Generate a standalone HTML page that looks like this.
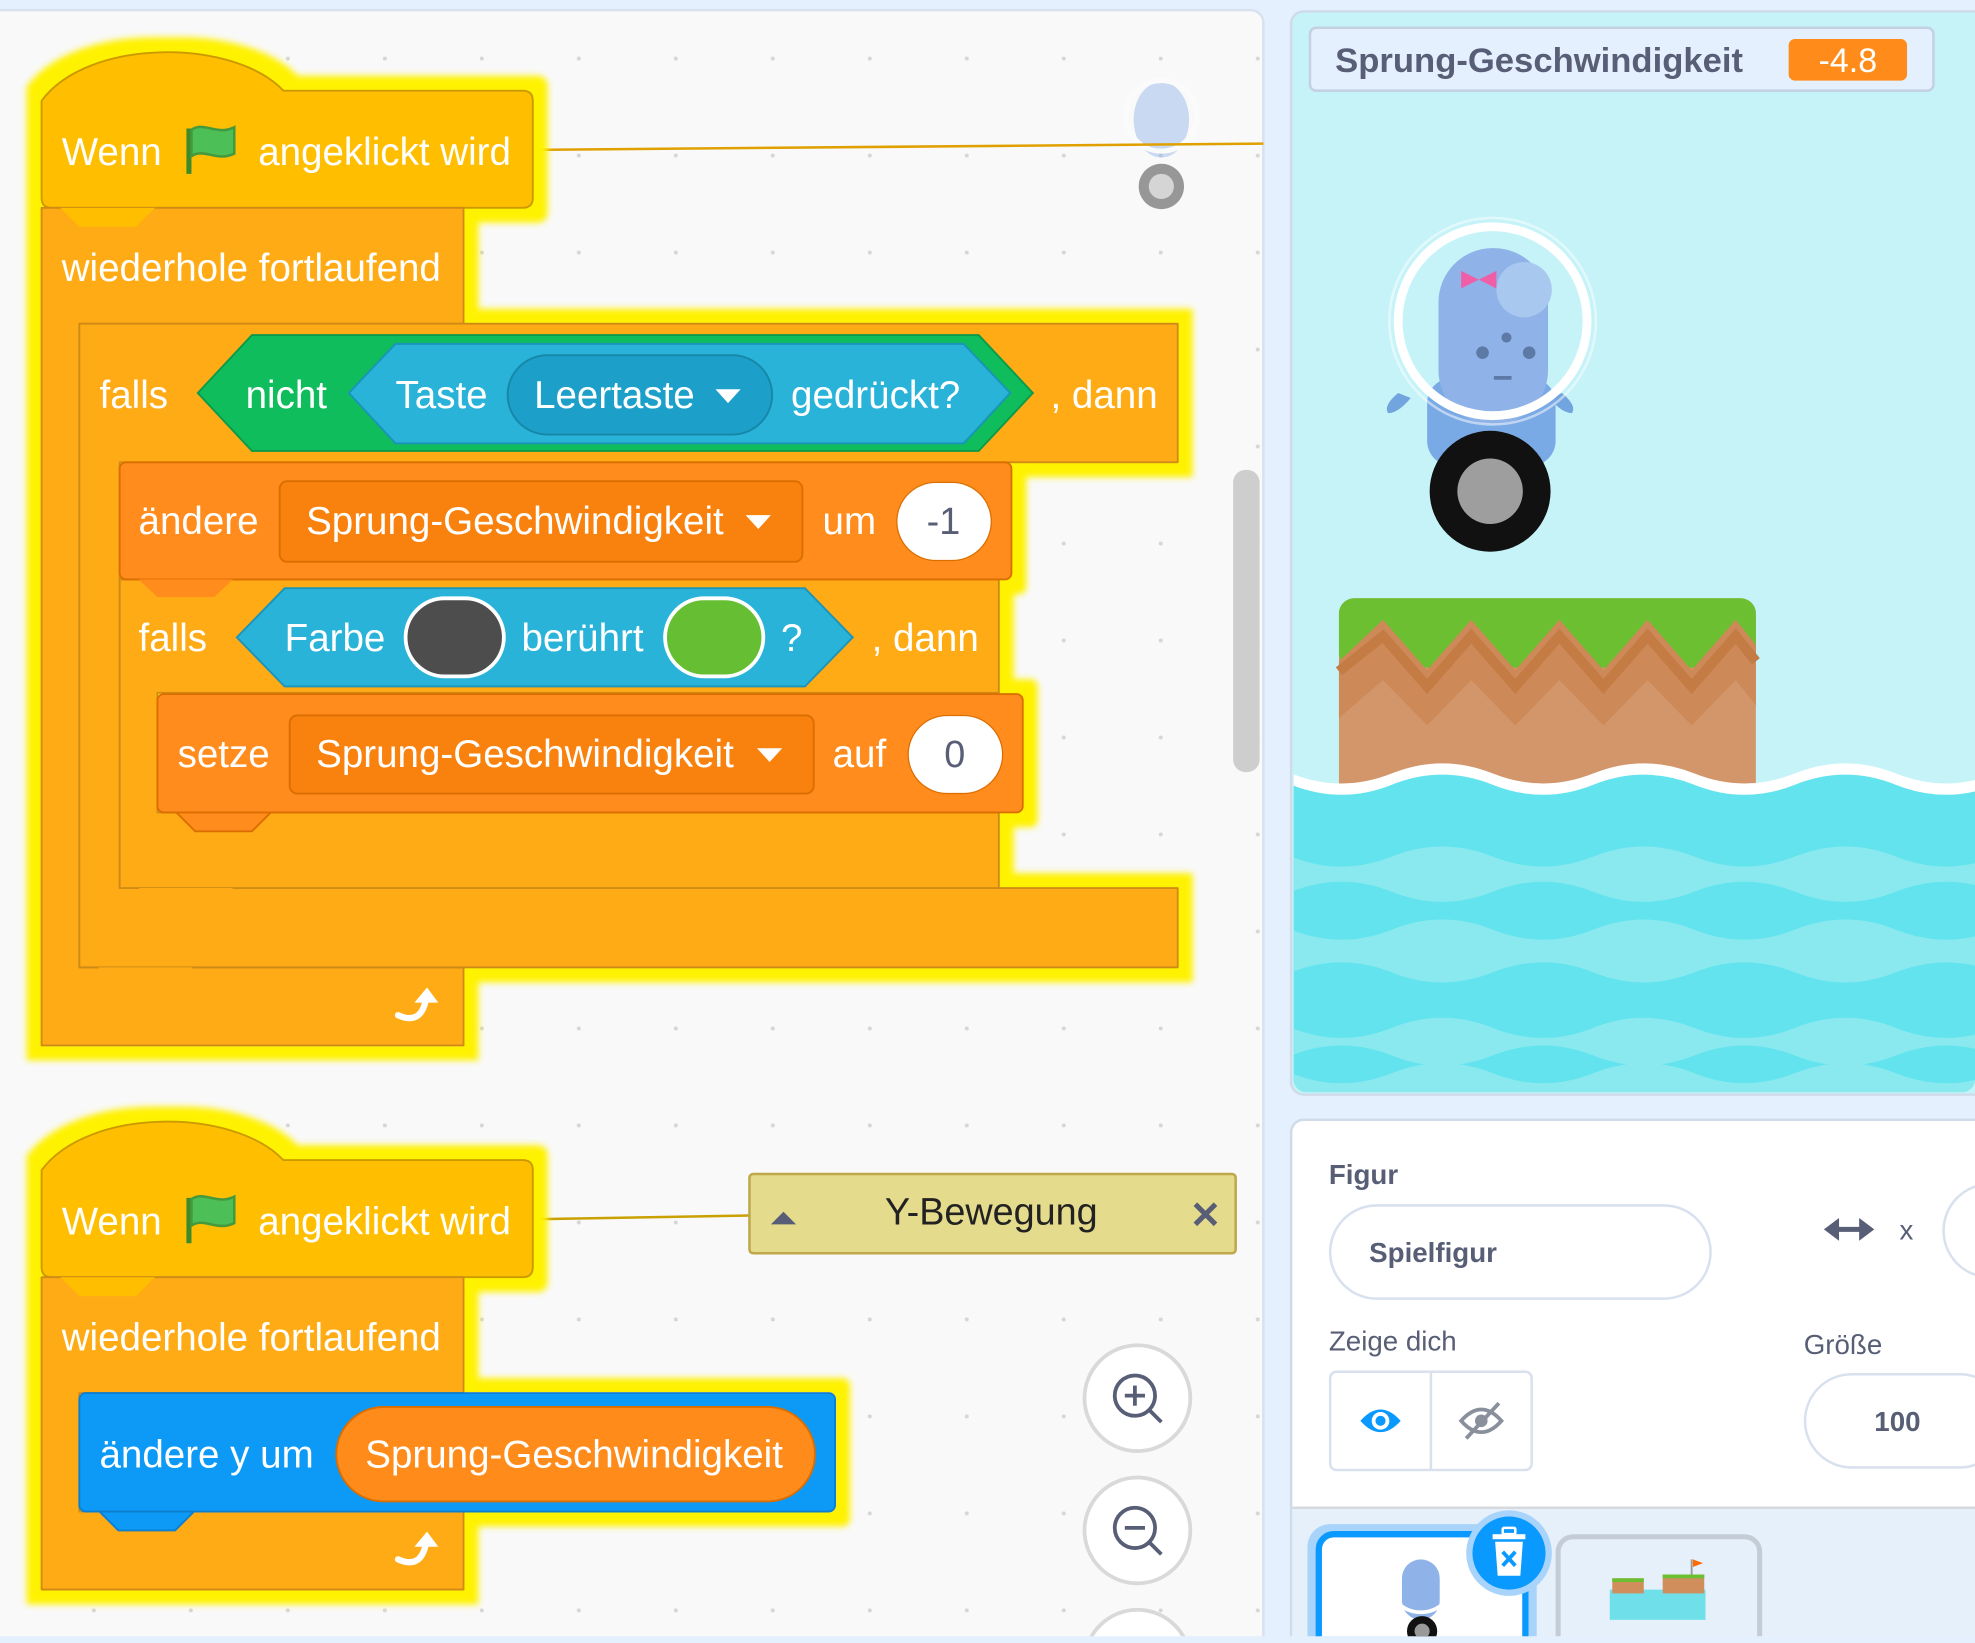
<!DOCTYPE html>
<html><head><meta charset="utf-8">
<style>
html,body{margin:0;padding:0;width:1975px;height:1636px;overflow:hidden;background:#e5f0ff;}
#wrap{position:absolute;left:0;top:0;width:1568px;height:1299px;transform:scale(1.2596);transform-origin:0 0;}
svg text{font-family:"Liberation Sans",sans-serif;}
</style></head><body>
<div id="wrap">
<svg width="1568" height="1299" viewBox="0 0 1568 1299" xmlns="http://www.w3.org/2000/svg">
<defs>
<pattern id="dots" x="73" y="45" width="77" height="77" patternUnits="userSpaceOnUse">
<circle cx="1.5" cy="1.5" r="1.6" fill="#d6d6d6"/></pattern>
<filter id="glow" x="-10%" y="-10%" width="120%" height="120%">
<feMorphology in="SourceAlpha" operator="dilate" radius="11" result="d"/>
<feGaussianBlur in="d" stdDeviation="2.5" result="b"/>
<feFlood flood-color="#fff200"/>
<feComposite in2="b" operator="in" result="g"/>
<feMerge><feMergeNode in="g"/><feMergeNode in="SourceGraphic"/></feMerge>
</filter>
<clipPath id="stageclip"><rect x="1027" y="10" width="541" height="857" rx="10"/></clipPath>
</defs>

<rect x="0" y="0" width="1568" height="1299" fill="#e5f0ff"/>
<rect x="-10" y="8" width="1013" height="1310" rx="10" fill="#f9f9f9" stroke="#d9e1ee" stroke-width="2"/>
<rect x="0" y="9" width="1002" height="1290" fill="url(#dots)"/>

<rect x="979" y="373" width="21" height="240" rx="10" fill="#cecece"/>

<g opacity="0.45">
<ellipse cx="922" cy="95" rx="22" ry="30" fill="#8fb3e8"/>
<circle cx="922" cy="92" r="28" fill="none" stroke="#fff" stroke-width="4"/>
<circle cx="922" cy="148" r="18" fill="#222"/><circle cx="922" cy="148" r="10" fill="#aaa"/>
</g>

<line x1="423" y1="119" x2="1003" y2="114" stroke="#e0a000" stroke-width="2"/>
<line x1="423" y1="968" x2="595" y2="965" stroke="#c9a100" stroke-width="2"/>

<g filter="url(#glow)" stroke-linejoin="round">
<path d="M33,80 C70,30 185,30 225,72 L415,72 Q423,72 423,80 L423,157 Q423,165 415,165 L41,165 Q33,165 33,157 Z" fill="#ffbf00" stroke="#cc9900" stroke-width="1.5"/>
<path d="M33,165 H368 V257 H63 V768 H368 V830 H33 Z" fill="#ffab19" stroke="#cf8b17" stroke-width="1.5"/>
<path d="M63,257 H935 V367 H95 V705 H935 V768 H63 Z" fill="#ffab19" stroke="#cf8b17" stroke-width="1.5"/>
<path d="M95,460 H793 V550 H125 V645 H793 V705 H95 Z" fill="#ffab19" stroke="#cf8b17" stroke-width="1.5"/>
<rect x="95" y="367" width="708" height="93" rx="5" fill="#ff8c1a" stroke="#db6e00" stroke-width="1.5"/>
<polygon points="110,460 125,474 170,474 185,460" fill="#ff8c1a"/>
<rect x="125" y="551" width="687" height="94" rx="5" fill="#ff8c1a" stroke="#db6e00" stroke-width="1.5"/>
<polygon points="140,645 155,660 200,660 215,645" fill="#ff8c1a" stroke="#db6e00" stroke-width="1.5"/>
<polygon points="48,165 63,180 108,180 123,165" fill="#ffbf00"/>
<polygon points="78,768 93,783 138,783 153,768" fill="#ffab19"/>
<polygon points="110,705 125,720 170,720 185,705" fill="#ffab19"/>
</g>
<polygon points="157,312 200,266 777,266 820,312 777,358 200,358" fill="#0fbd5c" stroke="#0b9a4a" stroke-width="1.5"/>
<polygon points="277,312 314,273 765,273 802,312 765,352 314,352" fill="#2ab3d9" stroke="#1a94b8" stroke-width="1.5"/>
<rect x="403" y="282" width="210" height="63" rx="31.5" fill="#1c9fc9" stroke="#1787a8" stroke-width="1.5"/>
<polygon points="188,506 226,467 639,467 677,506 639,545 226,545" fill="#2ab3d9" stroke="#1a94b8" stroke-width="1.5"/>
<rect x="322" y="475" width="78" height="62" rx="31" fill="#4d4d4d" stroke="#fff" stroke-width="3"/>
<rect x="528" y="475" width="78" height="62" rx="31" fill="#66bf33" stroke="#fff" stroke-width="3"/>
<rect x="222" y="382" width="415" height="64" rx="6" fill="#f9820f" stroke="#db6e00" stroke-width="1.5"/>
<rect x="712" y="383" width="75" height="62" rx="31" fill="#fff" stroke="#db6e00" stroke-width="1"/>
<rect x="230" y="568" width="416" height="62" rx="6" fill="#f9820f" stroke="#db6e00" stroke-width="1.5"/>
<rect x="721" y="568" width="75" height="62" rx="31" fill="#fff" stroke="#db6e00" stroke-width="1"/>

<g fill="#fff" font-size="30.6">
<text x="49" y="131">Wenn</text>
<text x="205" y="131">angeklickt wird</text>
<text x="49" y="223">wiederhole fortlaufend</text>
<text x="79" y="324">falls</text>
<text x="195" y="324">nicht</text>
<text x="314" y="324">Taste</text>
<text x="424" y="324">Leertaste</text>
<text x="628" y="324">gedrückt?</text>
<text x="834" y="324">, dann</text>
<text x="110" y="424">ändere</text>
<text x="243" y="424">Sprung-Geschwindigkeit</text>
<text x="653" y="424">um</text>
<text x="110" y="517">falls</text>
<text x="226" y="517">Farbe</text>
<text x="414" y="517">berührt</text>
<text x="620" y="517">?</text>
<text x="692" y="517">, dann</text>
<text x="141" y="609">setze</text>
<text x="251" y="609">Sprung-Geschwindigkeit</text>
<text x="661" y="609">auf</text>
</g>
<g fill="#575e75" font-size="30" text-anchor="middle">
<text x="749" y="424">-1</text><text x="758" y="609">0</text></g>
<g fill="#fff">
<polygon points="568,309 588,309 578,320"/><polygon points="592,409 612,409 602,420"/><polygon points="601,594 621,594 611,605"/>
</g>
<g id="flag1">
<path d="M150,102 V138" stroke="#3d8a2a" stroke-width="4"/>
<path d="M152,103 C162,96 172,108 186,101 V122 C172,129 162,117 152,124 Z" fill="#4cbf56" stroke="#45993d" stroke-width="2"/>
</g>
<g id="loop1">
<path d="M316,806 Q334,814 338,794" stroke="#fff" stroke-width="5" fill="none" stroke-linecap="round"/><polygon points="329,796 348,796 339,784" fill="#fff"/>
</g>

<g filter="url(#glow)" stroke-linejoin="round">
<path d="M33,929 C70,879 185,879 225,921 L415,921 Q423,921 423,929 L423,1006 Q423,1014 415,1014 L41,1014 Q33,1014 33,1006 Z" fill="#ffbf00" stroke="#cc9900" stroke-width="1.5"/>
<path d="M33,1014 H368 V1106 H63 V1200 H368 V1262 H33 Z" fill="#ffab19" stroke="#cf8b17" stroke-width="1.5"/>
<rect x="63" y="1106" width="600" height="94" rx="5" fill="#0a9af7" stroke="#0b7fd0" stroke-width="1.5"/>
<polygon points="79,1200 94,1215 139,1215 154,1200" fill="#0a9af7" stroke="#0b7fd0" stroke-width="1.5"/>
<polygon points="48,1014 63,1029 108,1029 123,1014" fill="#ffbf00"/>
</g>
<rect x="267" y="1117" width="380" height="75" rx="37.5" fill="#ff8c1a" stroke="#db6e00" stroke-width="1.5"/>
<g fill="#fff" font-size="30.6">
<text x="49" y="980">Wenn</text>
<text x="205" y="980">angeklickt wird</text>
<text x="49" y="1072">wiederhole fortlaufend</text>
<text x="79" y="1165">ändere y um</text>
<text x="290" y="1165">Sprung-Geschwindigkeit</text>
</g>
<use href="#flag1" y="849"/>
<use href="#loop1" y="432"/>

<rect x="595" y="932" width="386" height="63" rx="3" fill="#e4db8c" stroke="#bfa84a" stroke-width="2"/>
<polygon points="612,972 632,972 622,962" fill="#575e75"/>
<text x="787" y="972" font-size="30" text-anchor="middle" fill="#222">Y-Bewegung</text>
<path d="M949,956 L965,972 M965,956 L949,972" stroke="#575e75" stroke-width="4"/>

<g fill="#fff" stroke="#d9d9d9" stroke-width="3">
<circle cx="903" cy="1110" r="42"/><circle cx="903" cy="1215" r="42"/><circle cx="903" cy="1320" r="42"/></g>
<g fill="none" stroke="#575e75" stroke-width="3">
<circle cx="901" cy="1108" r="16"/><line x1="913" y1="1120" x2="922" y2="1129"/><line x1="893" y1="1108" x2="909" y2="1108"/><line x1="901" y1="1100" x2="901" y2="1116"/>
<circle cx="901" cy="1213" r="16"/><line x1="913" y1="1225" x2="922" y2="1234"/><line x1="893" y1="1213" x2="909" y2="1213"/>
</g>

<rect x="1025" y="9" width="560" height="860" rx="10" fill="#c5f3f8" stroke="#d0dbe9" stroke-width="2"/>
<g clip-path="url(#stageclip)">
<rect x="1063" y="475" width="331" height="160" rx="12" fill="#d3966b"/>
<rect x="1063" y="475" width="331" height="55" rx="12" fill="#6cbf30"/>
<path d="M1063,525 L1098,492 L1133,532 L1168,492 L1203,532 L1238,492 L1273,532 L1308,492 L1343,532 L1378,492 L1394,512 V560 L1378,540 L1343,576 L1308,540 L1273,576 L1238,540 L1203,576 L1168,540 L1133,576 L1098,540 L1063,570 Z" fill="#cd8a58"/>
<path d="M1063,533 L1098,505 L1133,545 L1168,505 L1203,545 L1238,505 L1273,545 L1308,505 L1343,545 L1378,505 L1394,525" stroke="#c47c44" stroke-width="8" fill="none"/>
<path d="M945,614 q40,-16 80,0 t80,0 t80,0 t80,0 t80,0 t80,0 t80,0 t80,0 V900 H945 Z" fill="#fff"/>
<path d="M945,623 q40,-16 80,0 t80,0 t80,0 t80,0 t80,0 t80,0 t80,0 t80,0 V900 H945 Z" fill="#63e3ee"/>
<path d="M945,680 q40,-16 80,0 t80,0 t80,0 t80,0 t80,0 t80,0 t80,0 t80,0 v28 q-40,-16 -80,0 t-80,0 t-80,0 t-80,0 t-80,0 t-80,0 t-80,0 t-80,0 Z" fill="#89e9ef"/>
<path d="M945,738 q40,-16 80,0 t80,0 t80,0 t80,0 t80,0 t80,0 t80,0 t80,0 v34 q-40,-16 -80,0 t-80,0 t-80,0 t-80,0 t-80,0 t-80,0 t-80,0 t-80,0 Z" fill="#89e9ef"/>
<path d="M945,816 q40,-16 80,0 t80,0 t80,0 t80,0 t80,0 t80,0 t80,0 t80,0 v22 q-40,-16 -80,0 t-80,0 t-80,0 t-80,0 t-80,0 t-80,0 t-80,0 t-80,0 Z" fill="#89e9ef"/>
<path d="M945,852 q40,-16 80,0 t80,0 t80,0 t80,0 t80,0 t80,0 t80,0 t80,0 v30 H945 Z" fill="#89e9ef"/>
<path d="M1110,312 q-12,10 -8,16 q8,0 18,-12 Z M1240,312 q12,10 8,16 q-8,0 -18,-12 Z" fill="#72a4e0"/>
<rect x="1133" y="300" width="102" height="70" rx="20" fill="#7aaae6"/>
<rect x="1142" y="197" width="87" height="140" rx="43" fill="#8fb3e8"/>
<circle cx="1210" cy="230" r="22" fill="#a9c8f0"/>
<circle cx="1185" cy="255" r="75" fill="none" stroke="#fff" stroke-width="7"/>
<circle cx="1185" cy="255" r="82" fill="none" stroke="#fff" stroke-width="2" opacity="0.5"/>
<path d="M1160,215 l14,7 l14,-7 v14 l-14,-7 l-14,7 Z" fill="#ef5fa7"/>
<circle cx="1177" cy="280" r="5" fill="#5d7aa6"/><circle cx="1196" cy="268" r="4" fill="#5d7aa6"/><circle cx="1214" cy="280" r="5" fill="#5d7aa6"/>
<line x1="1186" y1="300" x2="1200" y2="300" stroke="#5d7aa6" stroke-width="3"/>
<circle cx="1183" cy="390" r="48" fill="#111"/><circle cx="1183" cy="390" r="26" fill="#9e9e9e"/>
</g>
<rect x="1040" y="22" width="495" height="50" rx="5" fill="#e5f0ff" stroke="#c4d1e3" stroke-width="2"/>
<text x="1060" y="57" font-size="27.5" font-weight="bold" fill="#575e75">Sprung-Geschwindigkeit</text>
<rect x="1420" y="31" width="94" height="33" rx="5" fill="#ff8c1a"/>
<text x="1467" y="57" font-size="27" fill="#fff" text-anchor="middle">-4.8</text>

<rect x="1025" y="889" width="560" height="420" rx="10" fill="#fff" stroke="#d0dbe9" stroke-width="2"/>
<text x="1055" y="940" font-size="22" font-weight="bold" fill="#575e75">Figur</text>
<rect x="1056" y="957" width="302" height="74" rx="37" fill="#fff" stroke="#d9e1ee" stroke-width="2"/>
<text x="1087" y="1002" font-size="22" font-weight="bold" fill="#575e75">Spielfigur</text>
<path d="M1452,976 H1484" stroke="#575e75" stroke-width="4"/><polygon points="1448,976 1460,967 1460,985" fill="#575e75"/><polygon points="1488,976 1476,967 1476,985" fill="#575e75"/>
<text x="1508" y="984" font-size="22" fill="#575e75">x</text>
<rect x="1543" y="940" width="80" height="74" rx="37" fill="#fff" stroke="#d9e1ee" stroke-width="2"/>
<text x="1055" y="1072" font-size="22" fill="#575e75">Zeige dich</text>
<text x="1432" y="1075" font-size="22" fill="#575e75">Größe</text>
<rect x="1056" y="1089" width="160" height="78" rx="5" fill="#fff" stroke="#d9e1ee" stroke-width="2"/>
<line x1="1136" y1="1089" x2="1136" y2="1167" stroke="#d9e1ee" stroke-width="2"/>
<path d="M1080,1128 q16,-18 32,0 q-16,18 -32,0 Z" fill="#0a99ff"/><circle cx="1096" cy="1128" r="7" fill="#fff"/><circle cx="1096" cy="1128" r="4" fill="#0a99ff"/>
<path d="M1160,1128 q16,-18 32,0 q-16,18 -32,0 Z" fill="none" stroke="#8a8f9c" stroke-width="3"/><circle cx="1176" cy="1128" r="5" fill="#8a8f9c"/><line x1="1164" y1="1142" x2="1190" y2="1114" stroke="#8a8f9c" stroke-width="3"/>
<rect x="1433" y="1091" width="160" height="74" rx="37" fill="#fff" stroke="#d9e1ee" stroke-width="2"/>
<text x="1488" y="1136" font-size="22" font-weight="bold" fill="#575e75">100</text>

<rect x="1026" y="1197" width="560" height="110" fill="#e6f0fa"/>
<line x1="1026" y1="1197" x2="1568" y2="1197" stroke="#d6d9de" stroke-width="2"/>
<rect x="1038" y="1210" width="182" height="110" rx="18" fill="#a8d4fb"/>
<rect x="1047" y="1218" width="164" height="110" rx="12" fill="#fff" stroke="#0a99ff" stroke-width="5"/>
<rect x="1113" y="1238" width="30" height="48" rx="15" fill="#8fb3e8"/>
<circle cx="1128" cy="1254" r="26" fill="none" stroke="#fff" stroke-width="3"/>
<circle cx="1129" cy="1295" r="12" fill="#111"/><circle cx="1129" cy="1295" r="6" fill="#999"/>
<rect x="1237" y="1220" width="160" height="110" rx="12" fill="#e6f0fa" stroke="#c4ccd6" stroke-width="4"/>
<rect x="1278" y="1262" width="76" height="24" fill="#6fe0ea"/>
<rect x="1280" y="1253" width="25" height="12" fill="#cf8e5c"/><rect x="1280" y="1253" width="25" height="3" fill="#6cbf30"/>
<rect x="1320" y="1250" width="33" height="15" fill="#cf8e5c"/><rect x="1320" y="1250" width="33" height="3" fill="#6cbf30"/>
<line x1="1343" y1="1250" x2="1343" y2="1238" stroke="#999" stroke-width="1.5"/><polygon points="1344,1238 1352,1241 1344,1244" fill="#ff6a00"/>
<circle cx="1198" cy="1233" r="34" fill="#a8d4fb"/>
<circle cx="1198" cy="1233" r="29" fill="#0a99ff"/>
<rect x="1185" y="1218" width="26" height="4" fill="#fff"/><rect x="1193" y="1213" width="10" height="5" rx="1" fill="none" stroke="#fff" stroke-width="2"/>
<path d="M1187,1224 H1209 L1207,1251 H1189 Z" fill="#fff"/>
<path d="M1193,1232 L1203,1243 M1203,1232 L1193,1243" stroke="#0a99ff" stroke-width="3"/>
</svg>
</div>
</body></html>
